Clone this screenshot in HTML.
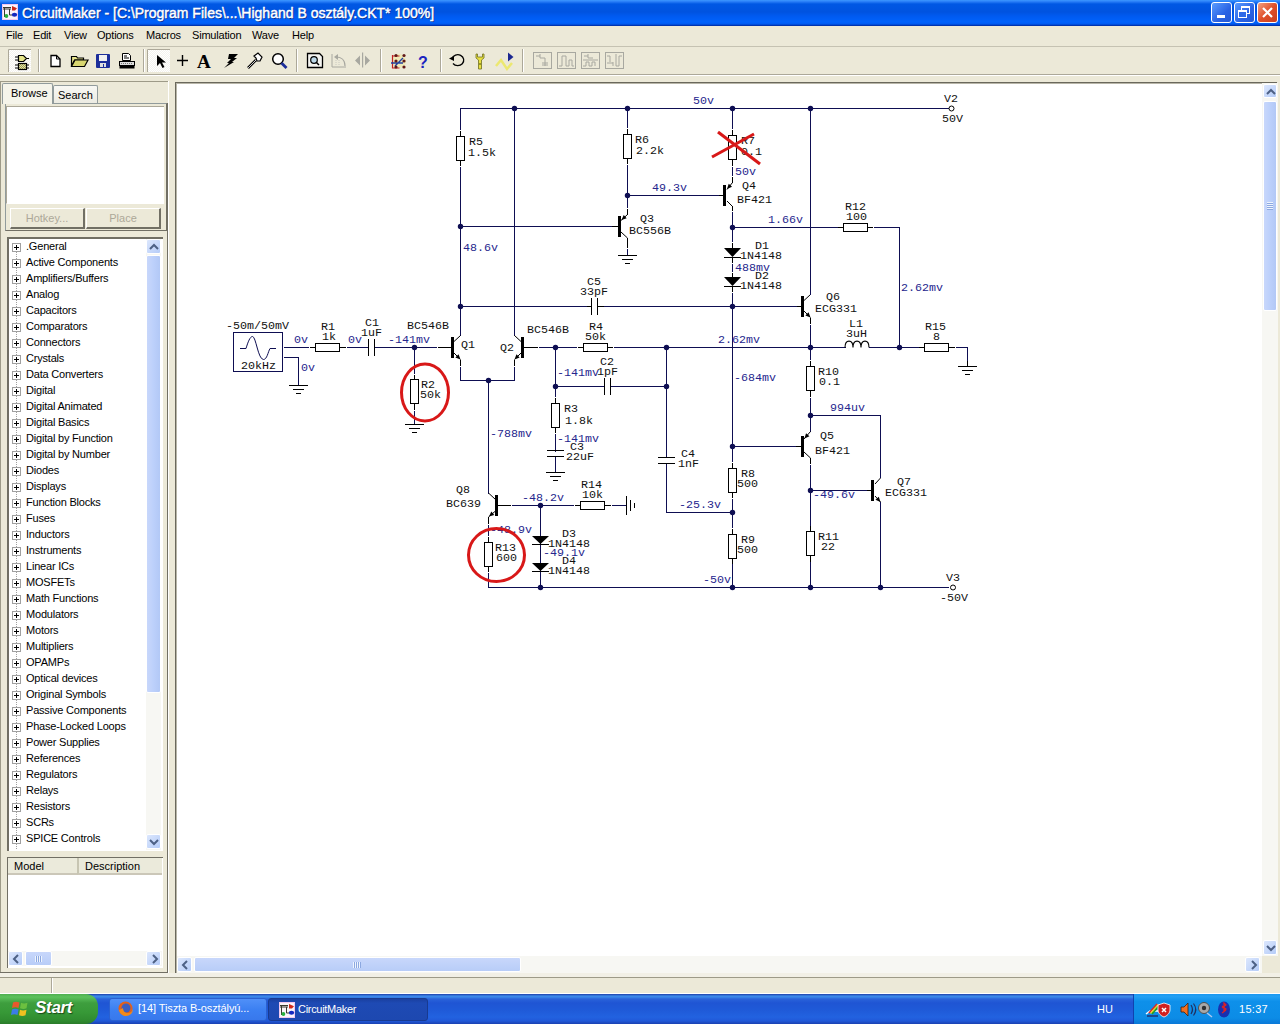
<!DOCTYPE html>
<html><head><meta charset="utf-8">
<style>
*{margin:0;padding:0;box-sizing:border-box}
html,body{width:1280px;height:1024px;overflow:hidden;background:#ECE9D8;font-family:"Liberation Sans",sans-serif;font-size:12px;color:#000}
.a{position:absolute}
#title{left:0;top:0;width:1280px;height:26px;background:linear-gradient(#3D98FF 0px,#2A80F8 1.5px,#0058E4 4px,#0053E0 12px,#005AF0 16px,#0062FC 22px,#005AF0 24px,#0034B0 25.5px,#0030A8 26px)}
#title .t{left:22px;top:5px;color:#fff;font-weight:normal;font-size:14px;letter-spacing:0px;white-space:nowrap;-webkit-text-stroke:0.45px #fff;text-shadow:1px 1px 0 #0A2A8A}
.wb{position:absolute;top:3px;width:21px;height:21px;border:1px solid #fff;border-radius:3px;background:linear-gradient(135deg,#5A9CFF,#2A63E4 60%,#2458D4)}
#menu span{position:absolute;top:29px;font-size:11px;letter-spacing:-0.2px}
#tb{left:0;top:46px;width:1280px;height:29px;border-top:1px solid #C5C2B2;border-bottom:1px solid #ACA899;background:#ECE9D8}
.sep{position:absolute;top:50px;width:2px;height:22px;border-left:1px solid #C5C2B2;border-right:1px solid #fff}
.ti{position:absolute;left:26px;font-size:11px;letter-spacing:-0.2px;font-weight:normal;white-space:nowrap}
.pb{position:absolute;left:12px;width:9px;height:9px;border:1px solid #A0A0A0;background:#fff}
.pb:before{content:"";position:absolute;left:1px;top:3px;width:5px;height:1px;background:#000}
.pb:after{content:"";position:absolute;left:3px;top:1px;width:1px;height:5px;background:#000}
.sb{position:absolute;border:1px solid #fff;border-radius:2px;background:linear-gradient(135deg,#DCE7FD,#B5CCF8)}
.frame{position:absolute;border-top:1px solid #ACA899;border-left:1px solid #ACA899;border-right:1px solid #716F64;border-bottom:1px solid #716F64}
.btn{position:absolute;background:#ECE9D8;border-right:2px solid #716F64;border-bottom:2px solid #716F64;border-left:1px solid #fff;border-top:1px solid #fff;color:#ACA899;text-align:center;font-size:11px;line-height:18px}

</style></head><body>
<div id="title" class="a">
  <svg class="a" style="left:2px;top:4px" width="16" height="16"><rect x="0" y="0" width="16" height="16" fill="#F0C8F0"/><rect x="1" y="1" width="14" height="14" fill="#FAF4FA"/><path d="M1 3.5h8M1 5h8M2.5 3v10M7.5 5v6h3" stroke="#3A3A30" stroke-width="1" fill="none"/><path d="M10 2l5 2.3l-2 2.2h-3z" fill="#D02818"/><ellipse cx="12.5" cy="10.8" rx="2.7" ry="2" fill="#1428C0"/><circle cx="4.4" cy="12" r="1.9" fill="#28B040"/></svg>
  <div class="t a">CircuitMaker - [C:\Program Files\...\Highand B osztály.CKT* 100%]</div>
  <div class="wb" style="left:1211px;top:2px"><div class="a" style="left:5px;top:12px;width:8px;height:3px;background:#fff"></div></div>
  <div class="wb" style="left:1234px;top:2px"><div class="a" style="left:6px;top:3px;width:9px;height:8px;border:1px solid #fff;border-top-width:2px"></div><div class="a" style="left:3px;top:7px;width:9px;height:8px;border:1px solid #fff;border-top-width:2px;background:#2F6AE8"></div></div>
  <div class="wb" style="left:1257px;top:2px;background:linear-gradient(135deg,#F0A080,#E0502A 50%,#C84020)"><svg class="a" style="left:3px;top:3px" width="13" height="13"><path d="M2 2L11 11M11 2L2 11" stroke="#fff" stroke-width="2.2"/></svg></div>
</div>
<div id="menu">
  <span style="left:6px">File</span><span style="left:33px">Edit</span><span style="left:64px">View</span><span style="left:97px">Options</span><span style="left:146px">Macros</span><span style="left:192px">Simulation</span><span style="left:252px">Wave</span><span style="left:292px">Help</span>
</div>
<div id="tb" class="a"></div>
<svg class="a" style="left:0;top:0" width="640" height="80">
<defs>
<pattern id="dith" width="2" height="2" patternUnits="userSpaceOnUse"><rect width="2" height="2" fill="#F4F3EE"/><rect width="1" height="1" fill="#FFFFFF"/><rect x="1" y="1" width="1" height="1" fill="#FFFFFF"/></pattern>
<pattern id="chk" width="2" height="2" patternUnits="userSpaceOnUse"><rect width="2" height="2" fill="#E8E8A0"/><rect width="1" height="1" fill="#9A9A60"/><rect x="1" y="1" width="1" height="1" fill="#9A9A60"/></pattern>
</defs>
<!-- separators -->
<g fill="#ACA899"><rect x="38" y="49" width="1" height="23"/><rect x="143" y="49" width="1" height="23"/><rect x="296" y="49" width="1" height="23"/><rect x="380" y="49" width="1" height="23"/><rect x="440" y="49" width="1" height="23"/><rect x="522" y="49" width="1" height="23"/></g>
<g fill="#FFFFFF"><rect x="39" y="49" width="1" height="23"/><rect x="144" y="49" width="1" height="23"/><rect x="297" y="49" width="1" height="23"/><rect x="381" y="49" width="1" height="23"/><rect x="441" y="49" width="1" height="23"/><rect x="523" y="49" width="1" height="23"/></g>
<!-- pressed buttons -->
<rect x="8" y="49" width="23" height="23" fill="url(#dith)"/><path d="M8.5 72V49.5H31" stroke="#ACA899" fill="none"/>
<rect x="147" y="49" width="23" height="23" fill="url(#dith)"/><path d="M147.5 72V49.5H170" stroke="#ACA899" fill="none"/>
<!-- gate icon -->
<path d="M18.5 55.5h5l3 3l-3 3h-5z" fill="#E6E68A" stroke="#000" stroke-width="1.2"/>
<path d="M15 57h3.5M15 60h3.5M26.5 58.5h2.5" stroke="#000" stroke-width="1.2"/>
<rect x="18.5" y="63.5" width="8" height="6" fill="url(#chk)" stroke="#000" stroke-width="1.2"/>
<path d="M15 65h3.5M15 68h3.5M26.5 65h2.5M26.5 68h2.5" stroke="#000" stroke-width="1.2"/>
<!-- new doc -->
<path d="M51 55.5h5.5l3.5 3.5v7.5h-9z" fill="#FFFFFF" stroke="#000" stroke-width="1.3"/><path d="M56.5 55.5v3.5h3.5" fill="none" stroke="#000" stroke-width="1"/>
<!-- folder -->
<path d="M71.5 56.5h5l1 1.5h6v2h-9l-3 6h-0z" fill="#E6E48C" stroke="#000" stroke-width="1.2"/>
<path d="M71.5 66.5l3.5-6.5h13l-3.5 6.5z" fill="#D8D670" stroke="#000" stroke-width="1.2"/>
<!-- floppy -->
<rect x="96" y="54" width="14" height="14" rx="1" fill="#1C2E9A"/><rect x="99" y="55" width="8" height="6" fill="#F0F0F0"/><rect x="100" y="63" width="6" height="4" fill="#E0E0E0"/><rect x="103" y="64" width="1" height="3" fill="#1C2E9A"/>
<!-- printer -->
<path d="M122.5 53.5h6l2 2v5h-8z" fill="#FFF" stroke="#000"/><path d="M124 56h3M124 58h5" stroke="#000"/>
<rect x="119.5" y="61.5" width="15" height="4" fill="#DDD" stroke="#000"/><path d="M121 63.5h12" stroke="#777" stroke-dasharray="1 1"/>
<rect x="119.5" y="66" width="15" height="2.5" fill="#000"/>
<!-- arrow cursor -->
<path d="M157 55v11l3-3l2.5 5l2-1l-2.5-4.5h4z" fill="#000"/>
<!-- plus -->
<path d="M177 60.5h11M182.5 55v11" stroke="#000" stroke-width="1.4"/>
<!-- A -->
<text x="197" y="68" font-family="Liberation Serif" font-weight="bold" font-size="19" fill="#000">A</text>
<!-- lightning -->
<path d="M229 54h9l-4 4h3l-5 4h2l-10 6l5-5h-2l4-4h-3z" fill="#000"/>
<!-- probe -->
<path d="M254 56l4-3l4 4l-2 4l-3 0l-1-3z" fill="#fff" stroke="#000" stroke-width="1.2"/><path d="M256 60l-8 8" stroke="#000" stroke-width="2.5"/><path d="M256 60l-8 8" stroke="#fff" stroke-width="0.8"/>
<!-- magnifier -->
<circle cx="278" cy="59" r="5.3" fill="#fff" stroke="#000" stroke-width="1.5"/><path d="M281.5 63l5 5" stroke="#1C2E9A" stroke-width="2.8"/>
<!-- zoom doc -->
<path d="M307.5 53.5h12l3 3v11h-15z" fill="#F4F4F0" stroke="#000" stroke-width="1.3"/><circle cx="314" cy="60" r="3.3" fill="#BCD8E8" stroke="#000" stroke-width="1.2"/><path d="M316 62l3 3" stroke="#000" stroke-width="1.5"/>
<!-- gray undo -->
<path d="M332 54v13h14" fill="none" stroke="#A8A8A0"/><path d="M336 57c5 0 9 3 9 9" fill="none" stroke="#A8A8A0" stroke-width="1.2"/><path d="M334 57l4-3v6z" fill="#A8A8A0"/><path d="M336 60v6M339 60v6" stroke="#C8C8C0" stroke-dasharray="1 1"/>
<!-- gray flip -->
<path d="M355 60.5l5-5v10z M370 60.5l-5-5v10z" fill="#A8A8A0"/><rect x="362" y="52.5" width="1.2" height="15" fill="#A8A8A0"/>
<!-- netlist icon -->
<circle cx="399" cy="61" r="7" fill="#F0E8A0" opacity="0.6"/>
<path d="M392.5 55v13.5M392.5 56h7M392.5 68h7" stroke="#C02020" stroke-width="1.2" fill="none"/>
<path d="M395 66l8-8M391 63h12" stroke="#2040A0" stroke-width="1.4" fill="none"/>
<g fill="#601818"><circle cx="396" cy="55.5" r="1.6"/><circle cx="404" cy="55.5" r="1.6"/><circle cx="396" cy="61" r="1.6"/><circle cx="404" cy="61" r="1.6"/><circle cx="396" cy="67" r="1.6"/><circle cx="404" cy="67" r="1.6"/></g>
<!-- ? -->
<text x="418" y="67.5" font-family="Liberation Sans" font-weight="bold" font-size="16" fill="#1C24C0">?</text>
<!-- rotate -->
<path d="M452 58.5a6 5.5 0 1 1 1 5" fill="none" stroke="#000" stroke-width="1.3"/><path d="M449 58.5l5-2.5v5z" fill="#000"/>
<!-- wrench -->
<path d="M476 54v4l2.5 2v9h3v-9l2.5-2v-4l-1.5 0v3h-5v-3z" fill="#E8E040" stroke="#707020" stroke-width="0.8"/><rect x="479.5" y="63" width="1" height="2" fill="#505010"/>
<!-- wave + triangle -->
<path d="M496 66l5-6l6 9l5-6" fill="none" stroke="#ECE870" stroke-width="2.5"/>
<path d="M508 52.5l5.5 4.5l-5.5 4.5z" fill="#1C2890"/>
<!-- gray boxes -->
<g fill="none" stroke="#A8A8A0">
<rect x="533.5" y="52.5" width="18" height="16"/><path d="M536 56h4M540 54v4h5M545 58v8M542 63h6M542 65h6"/>
<rect x="557.5" y="52.5" width="18" height="16"/><path d="M559 66h3v-10h4v10h3v-6h3v6h2"/>
<rect x="581.5" y="52.5" width="18" height="16"/><path d="M584 56h4M588 54v4h5M583 60h15M583 66h3v-4h3v4h3v-4h3v4"/>
<rect x="605.5" y="52.5" width="18" height="16"/><path d="M607 56h3v6M607 63h6M613 66v-4M616 54v12h3v-10h3"/>
</g>
</svg>

<div class="a" style="left:0;top:75px;width:1280px;height:1px;background:#fff"></div>

<!-- left panel -->
<div class="a" style="left:0;top:81px;width:1px;height:892px;background:#9D9A88"></div>
<div class="a" style="left:167px;top:103px;width:1px;height:870px;background:#716F64"></div><div class="a" style="left:168px;top:81px;width:1px;height:892px;background:#FFFFFF"></div><div class="a" style="left:0;top:81px;width:168px;height:1px;background:#9D9A88"></div>
<!-- tabs -->
<div class="a" style="left:5px;top:103px;width:162px;height:128px;border:1px solid #919B9C;border-right-color:#716F64;border-bottom-color:#716F64;background:#ECE9D8"></div>
<div class="a" style="left:2px;top:83px;width:51px;height:21px;border:1px solid #919B9C;border-bottom:none;background:#F5F4EA;font-size:11px;padding:3px 0 0 8px;border-radius:2px 2px 0 0">Browse</div>
<div class="a" style="left:53px;top:85px;width:45px;height:18px;border:1px solid #919B9C;border-bottom:none;background:linear-gradient(#F8F8F4,#ECEBE2);font-size:11px;padding:3px 0 0 4px;border-radius:2px 2px 0 0">Search</div>
<div class="a" style="left:6px;top:106px;width:158px;height:98px;border-top:1px solid #ACA899;border-left:1px solid #ACA899;border-bottom:1px solid #fff;background:#fff"></div>
<div class="btn" style="left:10px;top:208px;width:75px;height:21px">Hotkey...</div>
<div class="btn" style="left:86px;top:208px;width:75px;height:21px">Place</div>
<!-- tree -->
<div class="a" style="left:7px;top:237px;width:156px;height:614px;border-top:2px solid #716F64;border-left:2px solid #716F64;background:#fff;overflow:hidden">
</div>
<div class="a" style="left:0;top:0;width:146px;height:850px;overflow:hidden">
<div class="a" style="left:16px;top:252px;width:1px;height:598px;background:repeating-linear-gradient(#A0A0A0 0 1px,transparent 1px 2px)"></div>
<i class="pb" style="top:243px"></i><b class="ti" style="top:240px">.General</b>
<i class="pb" style="top:259px"></i><b class="ti" style="top:256px">Active Components</b>
<i class="pb" style="top:275px"></i><b class="ti" style="top:272px">Amplifiers/Buffers</b>
<i class="pb" style="top:291px"></i><b class="ti" style="top:288px">Analog</b>
<i class="pb" style="top:307px"></i><b class="ti" style="top:304px">Capacitors</b>
<i class="pb" style="top:323px"></i><b class="ti" style="top:320px">Comparators</b>
<i class="pb" style="top:339px"></i><b class="ti" style="top:336px">Connectors</b>
<i class="pb" style="top:355px"></i><b class="ti" style="top:352px">Crystals</b>
<i class="pb" style="top:371px"></i><b class="ti" style="top:368px">Data Converters</b>
<i class="pb" style="top:387px"></i><b class="ti" style="top:384px">Digital</b>
<i class="pb" style="top:403px"></i><b class="ti" style="top:400px">Digital Animated</b>
<i class="pb" style="top:419px"></i><b class="ti" style="top:416px">Digital Basics</b>
<i class="pb" style="top:435px"></i><b class="ti" style="top:432px">Digital by Function</b>
<i class="pb" style="top:451px"></i><b class="ti" style="top:448px">Digital by Number</b>
<i class="pb" style="top:467px"></i><b class="ti" style="top:464px">Diodes</b>
<i class="pb" style="top:483px"></i><b class="ti" style="top:480px">Displays</b>
<i class="pb" style="top:499px"></i><b class="ti" style="top:496px">Function Blocks</b>
<i class="pb" style="top:515px"></i><b class="ti" style="top:512px">Fuses</b>
<i class="pb" style="top:531px"></i><b class="ti" style="top:528px">Inductors</b>
<i class="pb" style="top:547px"></i><b class="ti" style="top:544px">Instruments</b>
<i class="pb" style="top:563px"></i><b class="ti" style="top:560px">Linear ICs</b>
<i class="pb" style="top:579px"></i><b class="ti" style="top:576px">MOSFETs</b>
<i class="pb" style="top:595px"></i><b class="ti" style="top:592px">Math Functions</b>
<i class="pb" style="top:611px"></i><b class="ti" style="top:608px">Modulators</b>
<i class="pb" style="top:627px"></i><b class="ti" style="top:624px">Motors</b>
<i class="pb" style="top:643px"></i><b class="ti" style="top:640px">Multipliers</b>
<i class="pb" style="top:659px"></i><b class="ti" style="top:656px">OPAMPs</b>
<i class="pb" style="top:675px"></i><b class="ti" style="top:672px">Optical devices</b>
<i class="pb" style="top:691px"></i><b class="ti" style="top:688px">Original Symbols</b>
<i class="pb" style="top:707px"></i><b class="ti" style="top:704px">Passive Components</b>
<i class="pb" style="top:723px"></i><b class="ti" style="top:720px">Phase-Locked Loops</b>
<i class="pb" style="top:739px"></i><b class="ti" style="top:736px">Power Supplies</b>
<i class="pb" style="top:755px"></i><b class="ti" style="top:752px">References</b>
<i class="pb" style="top:771px"></i><b class="ti" style="top:768px">Regulators</b>
<i class="pb" style="top:787px"></i><b class="ti" style="top:784px">Relays</b>
<i class="pb" style="top:803px"></i><b class="ti" style="top:800px">Resistors</b>
<i class="pb" style="top:819px"></i><b class="ti" style="top:816px">SCRs</b>
<i class="pb" style="top:835px"></i><b class="ti" style="top:832px">SPICE Controls</b>
<i class="pb" style="top:851px"></i><b class="ti" style="top:848px">Subcircuit Symbols</b>
</div>
<div class="a" style="left:146px;top:239px;width:15px;height:611px;background:#F7F7F3"></div>
<div class="sb" style="left:146px;top:239px;width:15px;height:15px"><svg class="a" style="left:2px;top:3px" width="10" height="8"><path d="M1 6L5 2L9 6" stroke="#4D6185" stroke-width="2" fill="none"/></svg></div>
<div class="sb" style="left:146px;top:255px;width:15px;height:438px;background:linear-gradient(90deg,#C8D7FB,#BCD0FB 50%,#B2C8F6)"></div>
<div class="sb" style="left:146px;top:834px;width:15px;height:15px"><svg class="a" style="left:2px;top:3px" width="10" height="8"><path d="M1 2L5 6L9 2" stroke="#4D6185" stroke-width="2" fill="none"/></svg></div>
<!-- model list -->
<div class="a" style="left:7px;top:857px;width:156px;height:111px;border-top:1px solid #716F64;border-left:1px solid #716F64;background:#fff"></div>
<div class="a" style="left:8px;top:858px;width:69px;height:17px;background:#EBEADB;border-bottom:2px solid #CBC7B8;font-size:11px;padding:2px 0 0 6px">Model</div>
<div class="a" style="left:77px;top:858px;width:85px;height:17px;background:#EBEADB;border-left:2px solid #C7C5B2;border-bottom:2px solid #CBC7B8;font-size:11px;padding:2px 0 0 6px">Description</div>
<div class="a" style="left:8px;top:951px;width:154px;height:15px;background:#F7F7F3"></div>
<div class="sb" style="left:8px;top:951px;width:15px;height:15px"><svg class="a" style="left:3px;top:2px" width="8" height="10"><path d="M6 1L2 5L6 9" stroke="#4D6185" stroke-width="2" fill="none"/></svg></div>
<div class="sb" style="left:25px;top:951px;width:27px;height:15px;background:linear-gradient(#C8D7FB,#B8CDF8)"><div class="a" style="left:9px;top:4px;width:7px;height:6px;background:repeating-linear-gradient(90deg,#EEF4FE 0 1px,#8CA8E0 1px 2px)"></div></div>
<div class="sb" style="left:146px;top:951px;width:15px;height:15px"><svg class="a" style="left:4px;top:2px" width="8" height="10"><path d="M2 1L6 5L2 9" stroke="#4D6185" stroke-width="2" fill="none"/></svg></div>
<div class="a" style="left:0;top:972px;width:168px;height:1px;background:#716F64"></div>

<!-- canvas -->
<div class="a" style="left:175px;top:82px;width:1103px;height:892px;border-top:1px solid #6A685C;border-left:1px solid #6A685C;background:#fff;box-shadow:inset 1px 1px 0 #B8B6A8"></div><div class="a" style="left:1277px;top:82px;width:1px;height:892px;background:#E8E6DA"></div>
<svg class="a" style="left:0;top:0" width="1280" height="1024" font-family="Liberation Mono, monospace" font-size="11.67px" shape-rendering="auto">
<rect x="460" y="108" width="489" height="1" fill="#0E0E52"/>
<rect x="460" y="108" width="1" height="23" fill="#0E0E52"/>
<rect x="460" y="166" width="1" height="170" fill="#0E0E52"/>
<rect x="514" y="108" width="1" height="228" fill="#0E0E52"/>
<rect x="627" y="108" width="1" height="21" fill="#0E0E52"/>
<rect x="627" y="164" width="1" height="45" fill="#0E0E52"/>
<rect x="732" y="108" width="1" height="22" fill="#0E0E52"/>
<rect x="732" y="166" width="1" height="11" fill="#0E0E52"/>
<rect x="732" y="211" width="1" height="32" fill="#0E0E52"/>
<rect x="732" y="263" width="1" height="10" fill="#0E0E52"/>
<rect x="732" y="292" width="1" height="296" fill="#0E0E52"/>
<rect x="627" y="195" width="92" height="1" fill="#0E0E52"/>
<rect x="460" y="226" width="153" height="1" fill="#0E0E52"/>
<rect x="732" y="227" width="106" height="1" fill="#0E0E52"/>
<rect x="873" y="227" width="27" height="1" fill="#0E0E52"/>
<rect x="899" y="227" width="1" height="121" fill="#0E0E52"/>
<rect x="810" y="108" width="1" height="182" fill="#0E0E52"/>
<rect x="810" y="324" width="1" height="37" fill="#0E0E52"/>
<rect x="810" y="397" width="1" height="30" fill="#0E0E52"/>
<rect x="810" y="464" width="1" height="62" fill="#0E0E52"/>
<rect x="810" y="562" width="1" height="26" fill="#0E0E52"/>
<rect x="460" y="306" width="127" height="1" fill="#0E0E52"/>
<rect x="604" y="306" width="193" height="1" fill="#0E0E52"/>
<rect x="284" y="347" width="26" height="1" fill="#0E0E52"/>
<rect x="346" y="347" width="23" height="1" fill="#0E0E52"/>
<rect x="375" y="347" width="71" height="1" fill="#0E0E52"/>
<rect x="529" y="347" width="49" height="1" fill="#0E0E52"/>
<rect x="613" y="347" width="233" height="1" fill="#0E0E52"/>
<rect x="869" y="347" width="50" height="1" fill="#0E0E52"/>
<rect x="955" y="347" width="13" height="1" fill="#0E0E52"/>
<rect x="967" y="347" width="1" height="14" fill="#0E0E52"/>
<rect x="284" y="357" width="15" height="1" fill="#0E0E52"/>
<rect x="298" y="357" width="1" height="29" fill="#0E0E52"/>
<rect x="414" y="347" width="1" height="28" fill="#0E0E52"/>
<rect x="414" y="410" width="1" height="15" fill="#0E0E52"/>
<rect x="460" y="366" width="1" height="15" fill="#0E0E52"/>
<rect x="514" y="366" width="1" height="15" fill="#0E0E52"/>
<rect x="460" y="380" width="55" height="1" fill="#0E0E52"/>
<rect x="488" y="380" width="1" height="114" fill="#0E0E52"/>
<rect x="555" y="347" width="1" height="51" fill="#0E0E52"/>
<rect x="555" y="433" width="1" height="19" fill="#0E0E52"/>
<rect x="555" y="457" width="1" height="16" fill="#0E0E52"/>
<rect x="555" y="386" width="50" height="1" fill="#0E0E52"/>
<rect x="610" y="386" width="57" height="1" fill="#0E0E52"/>
<rect x="666" y="347" width="1" height="111" fill="#0E0E52"/>
<rect x="666" y="463" width="1" height="50" fill="#0E0E52"/>
<rect x="666" y="512" width="67" height="1" fill="#0E0E52"/>
<rect x="732" y="446" width="64" height="1" fill="#0E0E52"/>
<rect x="810" y="415" width="71" height="1" fill="#0E0E52"/>
<rect x="880" y="415" width="1" height="54" fill="#0E0E52"/>
<rect x="810" y="490" width="57" height="1" fill="#0E0E52"/>
<rect x="880" y="510" width="1" height="78" fill="#0E0E52"/>
<rect x="488" y="587" width="461" height="1" fill="#0E0E52"/>
<rect x="488" y="572" width="1" height="16" fill="#0E0E52"/>
<rect x="488" y="522" width="1" height="15" fill="#0E0E52"/>
<rect x="505" y="505" width="70" height="1" fill="#0E0E52"/>
<rect x="611" y="505" width="16" height="1" fill="#0E0E52"/>
<rect x="540" y="505" width="1" height="83" fill="#0E0E52"/>
<rect x="233.5" y="332.5" width="49" height="39" fill="#fff" stroke="#0E0E52" stroke-width="1"/>
<path d="M240 348.5 L246 348.5 C248 342 250 336.5 252.5 336.5 C256 336.5 258 359.5 263.5 359.5 C267 359.5 268 352 270 348.5 L276 348.5" fill="none" stroke="#0E0E52" stroke-width="1"/>
<rect x="289" y="385" width="19" height="1" fill="#000"/>
<rect x="293" y="389" width="11" height="1" fill="#000"/>
<rect x="296" y="393" width="5" height="1" fill="#000"/>
<rect x="315.5" y="343.5" width="24" height="8" fill="#fff" stroke="#000" stroke-width="1"/>
<rect x="310" y="347" width="5" height="1" fill="#000"/>
<rect x="340" y="347" width="6" height="1" fill="#000"/>
<rect x="368" y="339" width="1" height="17" fill="#000"/>
<rect x="374" y="339" width="1" height="17" fill="#000"/>
<rect x="410.5" y="379.5" width="8" height="24" fill="#fff" stroke="#000" stroke-width="1"/>
<rect x="414" y="375" width="1" height="5" fill="#000"/>
<rect x="414" y="404" width="1" height="6" fill="#000"/>
<rect x="405" y="424" width="19" height="1" fill="#000"/>
<rect x="409" y="428" width="11" height="1" fill="#000"/>
<rect x="412" y="432" width="5" height="1" fill="#000"/>
<rect x="456.5" y="136.5" width="8" height="24" fill="#fff" stroke="#000" stroke-width="1"/>
<rect x="460" y="131" width="1" height="5" fill="#000"/>
<rect x="460" y="161" width="1" height="5" fill="#000"/>
<rect x="623.5" y="134.5" width="8" height="24" fill="#fff" stroke="#000" stroke-width="1"/>
<rect x="627" y="129" width="1" height="5" fill="#000"/>
<rect x="627" y="159" width="1" height="5" fill="#000"/>
<rect x="728.5" y="135.5" width="8" height="24" fill="#fff" stroke="#000" stroke-width="1"/>
<rect x="732" y="130" width="1" height="5" fill="#000"/>
<rect x="732" y="160" width="1" height="6" fill="#000"/>
<rect x="451" y="337" width="3" height="21" fill="#000"/>
<line x1="454" y1="341.5" x2="460.5" y2="335.5" stroke="#000" stroke-width="1"/>
<line x1="454" y1="353" x2="460.5" y2="359.5" stroke="#000" stroke-width="1"/>
<polygon points="460.5,359.5 455.3734758363975,357.55545635173695 458.55545635173695,354.3734758363975" fill="#000"/>
<rect x="460" y="360" width="1" height="6" fill="#000"/>
<rect x="438" y="347" width="13" height="1" fill="#000"/>
<rect x="521" y="337" width="3" height="21" fill="#000"/>
<line x1="521" y1="341.5" x2="514.5" y2="335.5" stroke="#000" stroke-width="1"/>
<line x1="521" y1="353" x2="514.5" y2="359.5" stroke="#000" stroke-width="1"/>
<polygon points="514.5,359.5 516.444543648263,354.3734758363975 519.6265241636025,357.55545635173695" fill="#000"/>
<rect x="514" y="360" width="1" height="6" fill="#000"/>
<rect x="524" y="347" width="14" height="1" fill="#000"/>
<rect x="618" y="216" width="3" height="21" fill="#000"/>
<rect x="612" y="226" width="6" height="1" fill="#000"/>
<rect x="627" y="209" width="1" height="6" fill="#000"/>
<line x1="627.5" y1="214.5" x2="621" y2="220.5" stroke="#000" stroke-width="1"/>
<polygon points="621.5,220 623.6653902868396,214.96278004196162 626.7061511151677,218.27997367286494" fill="#000"/>
<line x1="621" y1="232" x2="627.5" y2="238" stroke="#000" stroke-width="1"/>
<rect x="627" y="238" width="1" height="10" fill="#000"/>
<rect x="627" y="248" width="1" height="8" fill="#0E0E52"/>
<rect x="618" y="255" width="19" height="1" fill="#000"/>
<rect x="622" y="259" width="11" height="1" fill="#000"/>
<rect x="625" y="263" width="5" height="1" fill="#000"/>
<rect x="723" y="185" width="3" height="21" fill="#000"/>
<rect x="719" y="195" width="4" height="1" fill="#000"/>
<rect x="732" y="177" width="1" height="6" fill="#000"/>
<line x1="732.5" y1="182.5" x2="727" y2="189.5" stroke="#000" stroke-width="1"/>
<polygon points="727,189 728.7200263271351,183.79384888483224 732.0372199580385,186.83460971316032" fill="#000"/>
<line x1="727" y1="201" x2="732.5" y2="206.5" stroke="#000" stroke-width="1"/>
<rect x="732" y="206" width="1" height="5" fill="#000"/>
<polygon points="724,248 741,248 732.5,257" fill="#000"/>
<rect x="724" y="257" width="17" height="1" fill="#000"/>
<rect x="732" y="243" width="1" height="5" fill="#000"/>
<rect x="732" y="258" width="1" height="5" fill="#000"/>
<polygon points="724,277 741,277 732.5,286" fill="#000"/>
<rect x="724" y="286" width="17" height="1" fill="#000"/>
<rect x="732" y="273" width="1" height="4" fill="#000"/>
<rect x="732" y="287" width="1" height="5" fill="#000"/>
<rect x="843.5" y="223.5" width="24" height="8" fill="#fff" stroke="#000" stroke-width="1"/>
<rect x="838" y="227" width="5" height="1" fill="#000"/>
<rect x="868" y="227" width="5" height="1" fill="#000"/>
<rect x="591" y="298" width="1" height="17" fill="#000"/>
<rect x="597" y="298" width="1" height="17" fill="#000"/>
<rect x="587" y="306" width="4" height="1" fill="#000"/>
<rect x="598" y="306" width="6" height="1" fill="#000"/>
<rect x="801" y="296" width="3" height="21" fill="#000"/>
<rect x="797" y="306" width="4" height="1" fill="#000"/>
<line x1="804" y1="300.5" x2="810.5" y2="294.5" stroke="#000" stroke-width="1"/>
<rect x="810" y="289" width="1" height="6" fill="#0E0E52"/>
<line x1="804" y1="311" x2="810.5" y2="317.5" stroke="#000" stroke-width="1"/>
<polygon points="810.5,317.5 805.3734758363975,315.55545635173695 808.555456351737,312.3734758363975" fill="#000"/>
<rect x="810" y="318" width="1" height="6" fill="#000"/>
<rect x="583.5" y="343.5" width="24" height="8" fill="#fff" stroke="#000" stroke-width="1"/>
<rect x="578" y="347" width="5" height="1" fill="#000"/>
<rect x="608" y="347" width="5" height="1" fill="#000"/>
<path d="M845 347.5 C845 339 853 339 853 347.5 C853 339 861 339 861 347.5 C861 339 869 339 869 347.5" fill="none" stroke="#000" stroke-width="1.1"/>
<rect x="924.5" y="343.5" width="24" height="8" fill="#fff" stroke="#000" stroke-width="1"/>
<rect x="919" y="347" width="5" height="1" fill="#000"/>
<rect x="949" y="347" width="6" height="1" fill="#000"/>
<rect x="958" y="366" width="19" height="1" fill="#000"/>
<rect x="962" y="370" width="11" height="1" fill="#000"/>
<rect x="965" y="374" width="5" height="1" fill="#000"/>
<rect x="967" y="361" width="1" height="6" fill="#000"/>
<rect x="806.5" y="366.5" width="8" height="24" fill="#fff" stroke="#000" stroke-width="1"/>
<rect x="810" y="361" width="1" height="5" fill="#000"/>
<rect x="810" y="391" width="1" height="6" fill="#000"/>
<rect x="604" y="378" width="1" height="17" fill="#000"/>
<rect x="610" y="378" width="1" height="17" fill="#000"/>
<rect x="551.5" y="403.5" width="8" height="24" fill="#fff" stroke="#000" stroke-width="1"/>
<rect x="555" y="398" width="1" height="5" fill="#000"/>
<rect x="555" y="428" width="1" height="5" fill="#000"/>
<rect x="547" y="450" width="17" height="1" fill="#000"/>
<rect x="547" y="456" width="17" height="1" fill="#000"/>
<rect x="546" y="472" width="19" height="1" fill="#000"/>
<rect x="550" y="476" width="11" height="1" fill="#000"/>
<rect x="553" y="480" width="5" height="1" fill="#000"/>
<rect x="658" y="457" width="17" height="1" fill="#000"/>
<rect x="658" y="463" width="17" height="1" fill="#000"/>
<rect x="728.5" y="468.5" width="8" height="24" fill="#fff" stroke="#000" stroke-width="1"/>
<rect x="732" y="463" width="1" height="5" fill="#000"/>
<rect x="732" y="493" width="1" height="5" fill="#000"/>
<rect x="728.5" y="534.5" width="8" height="24" fill="#fff" stroke="#000" stroke-width="1"/>
<rect x="732" y="529" width="1" height="5" fill="#000"/>
<rect x="732" y="559" width="1" height="5" fill="#000"/>
<rect x="806.5" y="531.5" width="8" height="24" fill="#fff" stroke="#000" stroke-width="1"/>
<rect x="810" y="526" width="1" height="5" fill="#000"/>
<rect x="810" y="556" width="1" height="6" fill="#000"/>
<rect x="801" y="436" width="3" height="21" fill="#000"/>
<rect x="796" y="446" width="5" height="1" fill="#000"/>
<rect x="810" y="426" width="1" height="6" fill="#0E0E52"/>
<line x1="810.5" y1="431.5" x2="804" y2="439" stroke="#000" stroke-width="1"/>
<polygon points="804.5,438.5 806.0456295119579,433.23943639789763 809.4622842226017,436.16799757844944" fill="#000"/>
<line x1="804" y1="452" x2="810.5" y2="458" stroke="#000" stroke-width="1"/>
<rect x="810" y="458" width="1" height="6" fill="#000"/>
<rect x="871" y="480" width="3" height="21" fill="#000"/>
<rect x="867" y="490" width="4" height="1" fill="#000"/>
<line x1="875" y1="484" x2="880.5" y2="478" stroke="#000" stroke-width="1"/>
<rect x="880" y="469" width="1" height="9" fill="#0E0E52"/>
<line x1="875" y1="496" x2="880.5" y2="502" stroke="#000" stroke-width="1"/>
<polygon points="880.5,502 875.4627800419615,499.8346097131603 878.7799736728649,496.79384888483224" fill="#000"/>
<rect x="880" y="502" width="1" height="8" fill="#0E0E52"/>
<rect x="495" y="495" width="3" height="21" fill="#000"/>
<rect x="498" y="505" width="13" height="1" fill="#000"/>
<line x1="488.5" y1="493" x2="495.5" y2="499.5" stroke="#000" stroke-width="1"/>
<line x1="495.5" y1="511" x2="488.5" y2="517" stroke="#000" stroke-width="1"/>
<polygon points="489,516.5 491.3635613835467,511.55266965058865 494.2703014701445,514.9879079347496" fill="#000"/>
<rect x="488" y="517" width="1" height="7" fill="#000"/>
<rect x="484.5" y="542.5" width="8" height="24" fill="#fff" stroke="#000" stroke-width="1"/>
<rect x="488" y="537" width="1" height="5" fill="#000"/>
<rect x="488" y="567" width="1" height="5" fill="#000"/>
<polygon points="532,536 549,536 540.5,544" fill="#000"/>
<rect x="532" y="544" width="17" height="1" fill="#000"/>
<polygon points="532,563 549,563 540.5,571" fill="#000"/>
<rect x="532" y="571" width="17" height="1" fill="#000"/>
<rect x="580.5" y="501.5" width="24" height="8" fill="#fff" stroke="#000" stroke-width="1"/>
<rect x="575" y="505" width="5" height="1" fill="#000"/>
<rect x="605" y="505" width="6" height="1" fill="#000"/>
<rect x="626" y="496" width="1" height="19" fill="#000"/>
<rect x="630" y="500" width="1" height="11" fill="#000"/>
<rect x="634" y="503" width="1" height="5" fill="#000"/>
<rect x="460" y="130" width="1" height="1" fill="#fff"/>
<rect x="460" y="166" width="1" height="1" fill="#fff"/>
<rect x="627" y="128" width="1" height="1" fill="#fff"/>
<rect x="627" y="164" width="1" height="1" fill="#fff"/>
<rect x="732" y="129" width="1" height="1" fill="#fff"/>
<rect x="732" y="166" width="1" height="1" fill="#fff"/>
<rect x="414" y="374" width="1" height="1" fill="#fff"/>
<rect x="414" y="410" width="1" height="1" fill="#fff"/>
<rect x="460" y="366" width="1" height="1" fill="#fff"/>
<rect x="514" y="366" width="1" height="1" fill="#fff"/>
<rect x="627" y="208" width="1" height="1" fill="#fff"/>
<rect x="627" y="248" width="1" height="1" fill="#fff"/>
<rect x="732" y="176" width="1" height="1" fill="#fff"/>
<rect x="732" y="211" width="1" height="1" fill="#fff"/>
<rect x="732" y="242" width="1" height="1" fill="#fff"/>
<rect x="732" y="263" width="1" height="1" fill="#fff"/>
<rect x="732" y="272" width="1" height="1" fill="#fff"/>
<rect x="732" y="292" width="1" height="1" fill="#fff"/>
<rect x="810" y="324" width="1" height="1" fill="#fff"/>
<rect x="810" y="360" width="1" height="1" fill="#fff"/>
<rect x="810" y="397" width="1" height="1" fill="#fff"/>
<rect x="555" y="397" width="1" height="1" fill="#fff"/>
<rect x="555" y="433" width="1" height="1" fill="#fff"/>
<rect x="732" y="462" width="1" height="1" fill="#fff"/>
<rect x="732" y="498" width="1" height="1" fill="#fff"/>
<rect x="732" y="528" width="1" height="1" fill="#fff"/>
<rect x="810" y="464" width="1" height="1" fill="#fff"/>
<rect x="488" y="524" width="1" height="1" fill="#fff"/>
<rect x="488" y="536" width="1" height="1" fill="#fff"/>
<rect x="488" y="572" width="1" height="1" fill="#fff"/>
<rect x="309" y="347" width="1" height="1" fill="#fff"/>
<rect x="346" y="347" width="1" height="1" fill="#fff"/>
<rect x="873" y="227" width="1" height="1" fill="#fff"/>
<rect x="577" y="347" width="1" height="1" fill="#fff"/>
<rect x="613" y="347" width="1" height="1" fill="#fff"/>
<rect x="955" y="347" width="1" height="1" fill="#fff"/>
<rect x="574" y="505" width="1" height="1" fill="#fff"/>
<rect x="611" y="505" width="1" height="1" fill="#fff"/>
<rect x="511" y="505" width="1" height="1" fill="#fff"/>
<rect x="437" y="347" width="1" height="1" fill="#fff"/>
<rect x="538" y="347" width="1" height="1" fill="#fff"/>
<circle cx="951.5" cy="108.5" r="2.5" fill="#fff" stroke="#000" stroke-width="1"/>
<circle cx="953" cy="587.5" r="2.5" fill="#fff" stroke="#000" stroke-width="1"/>
<circle cx="514.5" cy="108.5" r="2.7" fill="#0E0E52"/>
<circle cx="627.5" cy="108.5" r="2.7" fill="#0E0E52"/>
<circle cx="732.5" cy="108.5" r="2.7" fill="#0E0E52"/>
<circle cx="810.5" cy="108.5" r="2.7" fill="#0E0E52"/>
<circle cx="627.5" cy="195.5" r="2.7" fill="#0E0E52"/>
<circle cx="460.5" cy="226.5" r="2.7" fill="#0E0E52"/>
<circle cx="732.5" cy="227.5" r="2.7" fill="#0E0E52"/>
<circle cx="460.5" cy="306.5" r="2.7" fill="#0E0E52"/>
<circle cx="732.5" cy="306.5" r="2.7" fill="#0E0E52"/>
<circle cx="414.5" cy="347.5" r="2.7" fill="#0E0E52"/>
<circle cx="555.5" cy="347.5" r="2.7" fill="#0E0E52"/>
<circle cx="666.5" cy="347.5" r="2.7" fill="#0E0E52"/>
<circle cx="810.5" cy="347.5" r="2.7" fill="#0E0E52"/>
<circle cx="899.5" cy="347.5" r="2.7" fill="#0E0E52"/>
<circle cx="488.5" cy="380.5" r="2.7" fill="#0E0E52"/>
<circle cx="555.5" cy="386.5" r="2.7" fill="#0E0E52"/>
<circle cx="666.5" cy="386.5" r="2.7" fill="#0E0E52"/>
<circle cx="810.5" cy="415.5" r="2.7" fill="#0E0E52"/>
<circle cx="732.5" cy="446.5" r="2.7" fill="#0E0E52"/>
<circle cx="810.5" cy="490.5" r="2.7" fill="#0E0E52"/>
<circle cx="732.5" cy="512.5" r="2.7" fill="#0E0E52"/>
<circle cx="540.5" cy="505.5" r="2.7" fill="#0E0E52"/>
<circle cx="540.5" cy="587.5" r="2.7" fill="#0E0E52"/>
<circle cx="732.5" cy="587.5" r="2.7" fill="#0E0E52"/>
<circle cx="810.5" cy="587.5" r="2.7" fill="#0E0E52"/>
<circle cx="880.5" cy="587.5" r="2.7" fill="#0E0E52"/>
<text x="226" y="329" fill="#111">-50m/50mV</text>
<text x="241" y="369" fill="#111">20kHz</text>
<text x="321" y="330" fill="#111">R1</text>
<text x="322" y="340" fill="#111">1k</text>
<text x="365" y="326" fill="#111">C1</text>
<text x="361" y="336" fill="#111">1uF</text>
<text x="407" y="329" fill="#111">BC546B</text>
<text x="421" y="388" fill="#111">R2</text>
<text x="420" y="398" fill="#111">50k</text>
<text x="461" y="348" fill="#111">Q1</text>
<text x="500" y="351" fill="#111">Q2</text>
<text x="527" y="333" fill="#111">BC546B</text>
<text x="469" y="145" fill="#111">R5</text>
<text x="468" y="156" fill="#111">1.5k</text>
<text x="635" y="143" fill="#111">R6</text>
<text x="636" y="154" fill="#111">2.2k</text>
<text x="741" y="144" fill="#111">R7</text>
<text x="741" y="155" fill="#111">0.1</text>
<text x="640" y="222" fill="#111">Q3</text>
<text x="629" y="234" fill="#111">BC556B</text>
<text x="742" y="189" fill="#111">Q4</text>
<text x="737" y="203" fill="#111">BF421</text>
<text x="944" y="102" fill="#111">V2</text>
<text x="942" y="122" fill="#111">50V</text>
<text x="755" y="249" fill="#111">D1</text>
<text x="740" y="259" fill="#111">1N4148</text>
<text x="755" y="279" fill="#111">D2</text>
<text x="740" y="289" fill="#111">1N4148</text>
<text x="845" y="210" fill="#111">R12</text>
<text x="846" y="220" fill="#111">100</text>
<text x="587" y="285" fill="#111">C5</text>
<text x="580" y="295" fill="#111">33pF</text>
<text x="826" y="300" fill="#111">Q6</text>
<text x="815" y="312" fill="#111">ECG331</text>
<text x="589" y="330" fill="#111">R4</text>
<text x="585" y="340" fill="#111">50k</text>
<text x="849" y="327" fill="#111">L1</text>
<text x="846" y="337" fill="#111">3uH</text>
<text x="925" y="330" fill="#111">R15</text>
<text x="933" y="340" fill="#111">8</text>
<text x="818" y="375" fill="#111">R10</text>
<text x="819" y="385" fill="#111">0.1</text>
<text x="600" y="365" fill="#111">C2</text>
<text x="597" y="375" fill="#111">1pF</text>
<text x="564" y="412" fill="#111">R3</text>
<text x="565" y="424" fill="#111">1.8k</text>
<text x="570" y="450" fill="#111">C3</text>
<text x="566" y="460" fill="#111">22uF</text>
<text x="681" y="457" fill="#111">C4</text>
<text x="678" y="467" fill="#111">1nF</text>
<text x="741" y="477" fill="#111">R8</text>
<text x="737" y="487" fill="#111">500</text>
<text x="741" y="543" fill="#111">R9</text>
<text x="737" y="553" fill="#111">500</text>
<text x="820" y="439" fill="#111">Q5</text>
<text x="815" y="454" fill="#111">BF421</text>
<text x="897" y="485" fill="#111">Q7</text>
<text x="885" y="496" fill="#111">ECG331</text>
<text x="818" y="540" fill="#111">R11</text>
<text x="821" y="550" fill="#111">22</text>
<text x="946" y="581" fill="#111">V3</text>
<text x="940" y="601" fill="#111">-50V</text>
<text x="456" y="493" fill="#111">Q8</text>
<text x="446" y="507" fill="#111">BC639</text>
<text x="581" y="488" fill="#111">R14</text>
<text x="582" y="498" fill="#111">10k</text>
<text x="495" y="551" fill="#111">R13</text>
<text x="496" y="561" fill="#111">600</text>
<text x="562" y="537" fill="#111">D3</text>
<text x="548" y="547" fill="#111">1N4148</text>
<text x="562" y="564" fill="#111">D4</text>
<text x="548" y="574" fill="#111">1N4148</text>
<text x="294" y="343" fill="#26268E">0v</text>
<text x="301" y="371" fill="#26268E">0v</text>
<text x="348" y="343" fill="#26268E">0v</text>
<text x="388" y="343" fill="#26268E">-141mv</text>
<text x="693" y="104" fill="#26268E">50v</text>
<text x="735" y="175" fill="#26268E">50v</text>
<text x="652" y="191" fill="#26268E">49.3v</text>
<text x="463" y="251" fill="#26268E">48.6v</text>
<text x="768" y="223" fill="#26268E">1.66v</text>
<text x="735" y="271" fill="#26268E">488mv</text>
<text x="901" y="291" fill="#26268E">2.62mv</text>
<text x="718" y="343" fill="#26268E">2.62mv</text>
<text x="734" y="381" fill="#26268E">-684mv</text>
<text x="830" y="411" fill="#26268E">994uv</text>
<text x="557" y="376" fill="#26268E">-141mv</text>
<text x="490" y="437" fill="#26268E">-788mv</text>
<text x="557" y="442" fill="#26268E">-141mv</text>
<text x="679" y="508" fill="#26268E">-25.3v</text>
<text x="703" y="583" fill="#26268E">-50v</text>
<text x="813" y="498" fill="#26268E">-49.6v</text>
<text x="522" y="501" fill="#26268E">-48.2v</text>
<text x="490" y="533" fill="#26268E">-48.9v</text>
<text x="543" y="556" fill="#26268E">-49.1v</text>
<ellipse cx="425" cy="392.5" rx="23.5" ry="28.5" fill="none" stroke="#D81818" stroke-width="3"/>
<ellipse cx="496.5" cy="555" rx="28" ry="26.5" fill="none" stroke="#D81818" stroke-width="3"/>
<line x1="718" y1="132" x2="760" y2="164" stroke="#D81818" stroke-width="3"/>
<line x1="712" y1="157" x2="754" y2="134" stroke="#D81818" stroke-width="3"/>
</svg>
<div class="a" style="left:1262px;top:83px;width:16px;height:873px;background:#F7F7F3"></div>
<div class="sb" style="left:1263px;top:84px;width:14px;height:14px"><svg class="a" style="left:2px;top:3px" width="10" height="8"><path d="M1 6L5 2L9 6" stroke="#4D6185" stroke-width="2" fill="none"/></svg></div>
<div class="sb" style="left:1263px;top:101px;width:14px;height:210px;background:linear-gradient(90deg,#C8D7FB,#BCD0FB 50%,#B2C8F6)"><div class="a" style="left:3px;top:100px;width:6px;height:8px;background:repeating-linear-gradient(#EEF4FE 0 1px,#8CA8E0 1px 2px)"></div></div>
<div class="sb" style="left:1263px;top:940px;width:14px;height:15px"><svg class="a" style="left:2px;top:3px" width="10" height="8"><path d="M1 2L5 6L9 2" stroke="#4D6185" stroke-width="2" fill="none"/></svg></div>
<div class="a" style="left:177px;top:956px;width:1085px;height:17px;background:#F7F7F3"></div>
<div class="sb" style="left:177px;top:957px;width:15px;height:15px"><svg class="a" style="left:3px;top:2px" width="8" height="10"><path d="M6 1L2 5L6 9" stroke="#4D6185" stroke-width="2" fill="none"/></svg></div>
<div class="sb" style="left:194px;top:957px;width:327px;height:15px;background:linear-gradient(#C8D7FB,#B8CDF8)"><div class="a" style="left:158px;top:4px;width:8px;height:6px;background:repeating-linear-gradient(90deg,#EEF4FE 0 1px,#8CA8E0 1px 2px)"></div></div>
<div class="sb" style="left:1245px;top:957px;width:15px;height:15px"><svg class="a" style="left:4px;top:2px" width="8" height="10"><path d="M2 1L6 5L2 9" stroke="#4D6185" stroke-width="2" fill="none"/></svg></div>
<div class="a" style="left:1262px;top:956px;width:16px;height:18px;background:#ECE9D8"></div>

<!-- status -->
<div class="a" style="left:0;top:973px;width:1280px;height:4px;background:#F2F0E6"></div><div class="a" style="left:0;top:977px;width:1280px;height:1px;background:#9D9A88"></div>
<div class="a" style="left:51px;top:978px;width:1px;height:16px;background:#ACA899"></div>
<div class="a" style="left:52px;top:978px;width:1px;height:16px;background:#fff"></div>

<!-- taskbar -->
<div class="a" style="left:0;top:993px;width:1280px;height:1px;background:#fff"></div><div class="a" style="left:0;top:994px;width:1280px;height:30px;background:linear-gradient(#1E44A8 0px,#2A5CC8 1px,#3C8AE8 2px,#3A86E8 3px,#2A62DA 5px,#1F55D4 9px,#1F5AD8 16px,#2262E0 23px,#2058D8 27px,#1A40B0 30px)"></div>
<div class="a" style="left:0;top:994px;width:98px;height:30px;border-radius:0 12px 12px 0;background:linear-gradient(#4FAF4F 0%,#5CC25C 10%,#3E9E3E 30%,#379937 60%,#2F8A2F 90%,#2A7A2A 100%)"></div>
<svg class="a" style="left:11px;top:1000px" width="19" height="17"><path d="M2 2.5c2-1 4-1 6.5 0l-1 5.5c-2-1-4-1-6.5 0z" fill="#E8582C"/><path d="M10 2.8c2 1 4 1 6.5 0l-1 5.5c-2 1-4 1-6.5 0z" fill="#6CC040"/><path d="M1 9.5c2-1 4-1 6.5 0l-1 5.5c-2-1-4-1-6.5 0z" fill="#3C7CE8"/><path d="M9 9.8c2 1 4 1 6.5 0l-1 5.5c-2 1-4 1-6.5 0z" fill="#F0C020"/></svg>
<div class="a" style="left:35px;top:998px;color:#fff;font-size:17px;font-weight:bold;font-style:italic;text-shadow:1px 1px 1px #184818;letter-spacing:-0.3px">Start</div>
<div class="a" style="left:109px;top:998px;width:158px;height:23px;border-radius:3px;background:linear-gradient(#5090F8,#3C80F2 50%,#3878EC);border:1px solid #2A60D0"></div>
<svg class="a" style="left:118px;top:1001px" width="15" height="15"><circle cx="7.5" cy="7.5" r="7" fill="#E2601A"/><circle cx="8" cy="7" r="4.5" fill="#3A5EC0"/><path d="M1 9c1 4 4 6 7 6c4 0 7-3 7-7c-1 3-3 4-5 4c-3 0-5-2-5-5c-1 1-2 1-4 2z" fill="#F08A1A"/></svg>
<div class="a" style="left:138px;top:1002px;color:#fff;font-size:11px;white-space:nowrap;letter-spacing:-0.1px">[14] Tiszta B-osztályú...</div>
<div class="a" style="left:268px;top:998px;width:160px;height:23px;border-radius:3px;background:linear-gradient(#1A40A0,#1E4AB4 20%,#1D48B0);border:1px solid #183A90"></div>
<svg class="a" style="left:279px;top:1002px" width="16" height="16"><rect x="0" y="0" width="16" height="16" fill="#F0C8F0"/><rect x="1" y="1" width="14" height="14" fill="#FAF4FA"/><path d="M1 3.5h8M1 5h8M2.5 3v10M7.5 5v6h3" stroke="#3A3A30" stroke-width="1" fill="none"/><path d="M10 2l5 2.3l-2 2.2h-3z" fill="#D02818"/><ellipse cx="12.5" cy="10.8" rx="2.7" ry="2" fill="#1428C0"/><circle cx="4.4" cy="12" r="1.9" fill="#28B040"/></svg>
<div class="a" style="left:298px;top:1003px;color:#fff;font-size:11px;white-space:nowrap;letter-spacing:-0.3px">CircuitMaker</div>
<div class="a" style="left:1097px;top:1003px;color:#fff;font-size:11px">HU</div>
<div class="a" style="left:1133px;top:994px;width:147px;height:30px;border-left:1px solid #1042AF;background:linear-gradient(#1A98F0 0%,#22A0F4 8%,#0E90EA 25%,#0C8CE6 80%,#0A78D8 100%)"></div>
<svg class="a" style="left:1144px;top:1001px" width="90" height="17">
<path d="M2 13l4-3l8 0" stroke="#fff" stroke-width="1.5" fill="none"/><path d="M5 12l8-9" stroke="#E02020" stroke-width="1.6"/><path d="M6.5 12.5l8-9" stroke="#F0D020" stroke-width="1.6"/><path d="M8 13l7-8" stroke="#20A020" stroke-width="1.6"/><path d="M3 15h11" stroke="#203070" stroke-width="1.5"/>
<path d="M20 2l6 2v5c0 3-3 6-6 7c-3-1-6-4-6-7v-5z" fill="#D02020" stroke="#fff" stroke-width="0.8"/><path d="M18 7l4 4M22 7l-4 4" stroke="#fff" stroke-width="1.5"/>
<path d="M37 6h3l4-4v13l-4-4h-3z" fill="#F07020" stroke="#402010" stroke-width="0.8"/><path d="M47 4c2 3 2 6 0 9M49.5 2.5c3 4 3 8 0 12" stroke="#203060" stroke-width="1.2" fill="none"/>
<circle cx="60" cy="7" r="5.5" fill="#A8A8A8" stroke="#505050" stroke-width="1"/><circle cx="60" cy="7" r="2.2" fill="#303030"/><path d="M63 12l5 4" stroke="#B0C8F0" stroke-width="1.5"/>
<ellipse cx="80" cy="8.5" rx="6" ry="8" fill="#1830B0"/><path d="M78 5l4 3l-2 2v-8l2 2l-4 3M78 12l4-3" stroke="#E02020" stroke-width="1.2" fill="none"/>
</svg>
<div class="a" style="left:1239px;top:1003px;color:#fff;font-size:11px;letter-spacing:0.3px">15:37</div>

</body></html>
